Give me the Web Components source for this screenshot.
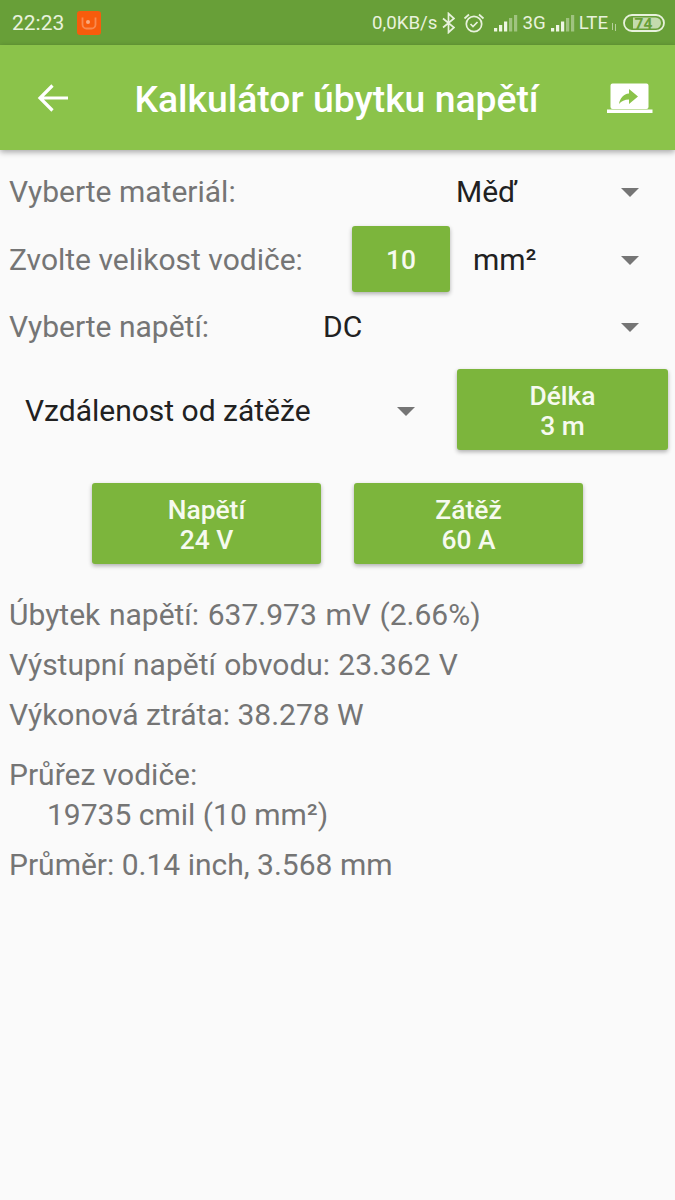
<!DOCTYPE html>
<html><head><meta charset="utf-8">
<style>
html,body{margin:0;padding:0;background:#fafafa;font-family:Roboto,sans-serif}
</style></head><body>
<app-screen></app-screen>
<script>
function def(name, html){
  customElements.define(name, class extends HTMLElement{
    constructor(){super();this.attachShadow({mode:'open'}).innerHTML=html;}
  });
}
const bars=`<svg width="25" height="18" viewBox="0 0 25 18"><g fill="#eef5e4"><rect x="0" y="14" width="3.200" height="3.500"/><rect x="5" y="11" width="3.200" height="6.500"/><rect x="10" y="7.500" width="3.200" height="10"/></g><g fill="#eef5e4" opacity=".42"><rect x="15" y="4" width="3.200" height="13.500"/><rect x="20" y="1" width="3.200" height="16.500"/></g></svg>`;
def('status-bar',`<style>
:host{display:flex;align-items:center;height:45px;background:#689f38;color:#e8f2dd;font-size:21px;box-sizing:border-box;padding:0 10px 0 12px}
.right{margin-left:auto;display:flex;align-items:center}
.app{width:24px;height:24px;background:#f75c0c;border-radius:3px;margin-left:13px;display:flex;align-items:center;justify-content:center}
svg{display:block;flex:none}
.net{font-size:18.700px}
</style>
<span>22:23</span>
<span class="app"><svg width="16" height="14" viewBox="0 0 16 14"><path d="M1.500 1.500v7a4 4 0 0 0 4 4h5a4 4 0 0 0 4-4v-7" fill="none" stroke="#f98a4f" stroke-width="1.800"/><circle cx="7" cy="6" r="2" fill="#fbab80"/></svg></span>
<span class="right">
<span class="net">0,0KB/s</span>
<svg style="margin-left:5px" width="13" height="22" viewBox="0 0 13 22"><path d="M1 6.500l11 9-5.500 5V1.500l5.500 5-11 9" fill="none" stroke="#e8f2dd" stroke-width="1.700"/></svg>
<svg style="margin-left:8px" width="22" height="22" viewBox="0 0 22 22"><circle cx="11" cy="12" r="7.700" fill="none" stroke="#e8f2dd" stroke-width="1.700"/><path d="M7.500 12l2.500 2.500 4.500-4.500M1.500 6.500L6 2.500M20.500 6.500L16 2.500" fill="none" stroke="#e8f2dd" stroke-width="1.700"/></svg>
<span style="margin-left:9px;display:flex">${bars}</span>
<span class="net" style="margin-left:3px">3G</span>
<span style="margin-left:5px;display:flex">${bars}</span>
<span class="net" style="margin-left:3px">LTE</span>
<svg style="margin-left:3px;margin-top:8px;opacity:.6" width="6" height="8" viewBox="0 0 6 8"><path d="M1.500 0v7M4.500 1v7" fill="none" stroke="#e8f2dd" stroke-width="1"/></svg>
<svg style="margin-left:6px" width="42" height="18" viewBox="0 0 42 18"><rect x="1" y="1" width="40" height="16" rx="8" fill="none" stroke="#e8f2dd" stroke-width="1.800"/><path d="M10 3.500H32.500a5.500 5.500 0 0 1 0 11H10z" fill="#e8f2dd" opacity=".72"/><text x="20.500" y="14.800" text-anchor="middle" font-family="Roboto" font-weight="700" font-size="15.500" fill="#689f38">74</text></svg>
</span>`);
def('app-bar',`<style>
:host{display:flex;align-items:center;height:105px;background:#8bc34a;color:#fff;box-shadow:0 2px 6px rgba(0,0,0,.35);position:relative;box-sizing:border-box;padding:0 22px 0 37px}
h1{margin:0;font:500 37.300px Roboto,sans-serif;flex:1;text-align:center;padding:3px 3px 0 0;white-space:nowrap}
svg{display:block;flex:none}
</style>
<svg width="32" height="32" viewBox="0 0 32 32"><path d="M31 16H3M15.500 3.500L3 16l12.500 12.500" fill="none" stroke="#fff" stroke-width="3.200"/></svg>
<h1>Kalkulátor úbytku napětí</h1>
<svg width="46" height="30" viewBox="0 0 46 30"><path d="M3.500 2.500a2 2 0 0 1 2-2H39.500a2 2 0 0 1 2 2V24a2 2 0 0 1-2 2H5.500a2 2 0 0 1-2-2z" fill="#fff"/><rect x="0" y="26.500" width="45.500" height="3.500" fill="#fff"/><path d="M22 6l9 7.500-9 7.500v-4.500c-4.500 0-7.500 1.500-10 4.500 1-6 4.500-10 10-10.500z" fill="#8bc34a"/></svg>`);
def('drop-down',`<style>
:host{display:flex;align-items:center;flex:1;min-width:0;font-size:30px;color:#212121;height:48px}
.v{flex:1;white-space:nowrap;padding-bottom:2px}
i{flex:none;width:0;height:0;border-left:9px solid transparent;border-right:9px solid transparent;border-top:9px solid #757575;margin-right:var(--caret-end,36px)}
</style><span class="v"><slot></slot></span><i></i>`);
def('green-button',`<style>
:host{display:flex;flex:none;box-sizing:border-box;align-items:center;justify-content:center;text-align:center;background:#7cb53c;color:#f6faef;border-radius:3px;font-size:26.400px;font-weight:500;line-height:30px;box-shadow:0 2px 4px rgba(0,0,0,.3);padding-top:3px}
</style><slot></slot>`);
def('form-row',`<style>
:host{display:flex;align-items:center;height:68px;box-sizing:border-box;padding-left:9px;font-size:30px;color:#757575;white-space:nowrap}
::slotted(.l){flex:none;padding-bottom:2px}
</style><slot></slot>`);
def('info-line',`<style>
:host{display:block;font-size:30px;line-height:50px;color:#757575;padding-left:9px;white-space:nowrap}
</style><slot></slot>`);
def('app-screen',`<style>
:host{display:block;height:1200px;background:#fafafa;overflow:hidden;font-family:Roboto,sans-serif}
main{display:block;padding-top:8px}
.btns{display:flex;gap:33px;justify-content:center;margin-top:33px}
.len{display:flex;align-items:center;padding:0 7px 0 25px;margin-top:8px;height:81px}
.res{margin-top:26px}
.res2{margin-top:10px}
</style>
<status-bar></status-bar>
<app-bar></app-bar>
<main>
<form-row><span class="l" style="width:447px">Vyberte materiál:</span><drop-down>Měď</drop-down></form-row>
<form-row><span class="l" style="width:343px">Zvolte velikost vodiče:</span><green-button style="width:98px;height:66px;padding-top:2px;margin-bottom:2px">10</green-button><span style="width:23px;flex:none"></span><drop-down>mm²</drop-down></form-row>
<form-row style="height:67px"><span class="l" style="width:314px">Vyberte napětí:</span><drop-down>DC</drop-down></form-row>
<div class="len"><drop-down style="--caret-end:42px;padding-top:4px">Vzdálenost od zátěže</drop-down><green-button style="width:211px;height:81px">Délka<br>3 m</green-button></div>
<div class="btns"><green-button style="width:229px;height:81px">Napětí<br>24 V</green-button><green-button style="width:229px;height:81px">Zátěž<br>60 A</green-button></div>
<div class="res"><info-line style="word-spacing:1.200px">Úbytek napětí: 637.973 mV (2.66%)</info-line><info-line style="word-spacing:.8px">Výstupní napětí obvodu: 23.362 V</info-line><info-line>Výkonová ztráta: 38.278 W</info-line></div>
<div class="res2"><info-line>Průřez vodiče:</info-line><info-line style="padding-left:47px;margin-top:-10px">19735 cmil (10 mm²)</info-line><info-line>Průměr: 0.14 inch, 3.568 mm</info-line></div>
</main>`);
</script>
</body></html>
